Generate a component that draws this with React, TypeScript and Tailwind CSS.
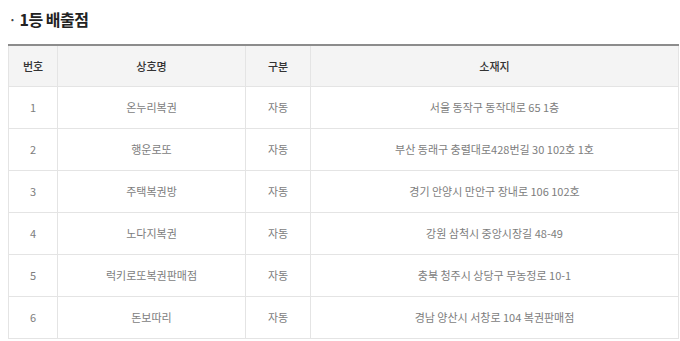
const rows = [
  { no: 1, name: "온누리복권", type: "자동", addr: "서울 동작구 동작대로 65 1층" },
  { no: 2, name: "행운로또", type: "자동", addr: "부산 동래구 충렬대로428번길 30 102호 1호" },
  { no: 3, name: "주택복권방", type: "자동", addr: "경기 안양시 만안구 장내로 106 102호" },
  { no: 4, name: "노다지복권", type: "자동", addr: "강원 삼척시 중앙시장길 48-49" },
  { no: 5, name: "럭키로또복권판매점", type: "자동", addr: "충북 청주시 상당구 무농정로 10-1" },
  { no: 6, name: "돈보따리", type: "자동", addr: "경남 양산시 서창로 104 복권판매점" },
];

export default function App() {
  return (
    <div
      className="w-[680px] h-[341px] overflow-hidden bg-white pl-2 pt-[8px]"
      style={{ fontFamily: '"Noto Sans CJK KR", "Noto Sans", sans-serif' }}
    >
      <h2 className="text-[16px] font-bold text-[#222] leading-[22px] tracking-[-0.5px]">
        <span className="pr-[3px] font-normal text-[#444]">·</span>1등 배출점
      </h2>

      <table className="mt-[14px] w-[671px] table-fixed border-collapse border-t-2 border-t-[#8c8c8c] text-[11px]">
        <colgroup>
          <col className="w-[49px]" />
          <col className="w-[188px]" />
          <col className="w-[65px]" />
          <col />
        </colgroup>
        <thead>
          <tr className="h-[41px] bg-[#f4f4f4] text-[#333]">
            <th className="border border-t-0 border-[#e4e4e4] font-medium">번호</th>
            <th className="border border-t-0 border-[#e4e4e4] font-medium">상호명</th>
            <th className="border border-t-0 border-[#e4e4e4] font-medium">구분</th>
            <th className="border border-t-0 border-[#e4e4e4] font-medium">소재지</th>
          </tr>
        </thead>
        <tbody className="text-[#7d7d7d]">
          {rows.map((r) => (
            <tr key={r.no} className="h-[42px]">
              <td className="border border-[#e4e4e4] text-center">{r.no}</td>
              <td className="border border-[#e4e4e4] text-center">{r.name}</td>
              <td className="border border-[#e4e4e4] text-center">{r.type}</td>
              <td className="border border-[#e4e4e4] text-center">{r.addr}</td>
            </tr>
          ))}
        </tbody>
      </table>
    </div>
  );
}
